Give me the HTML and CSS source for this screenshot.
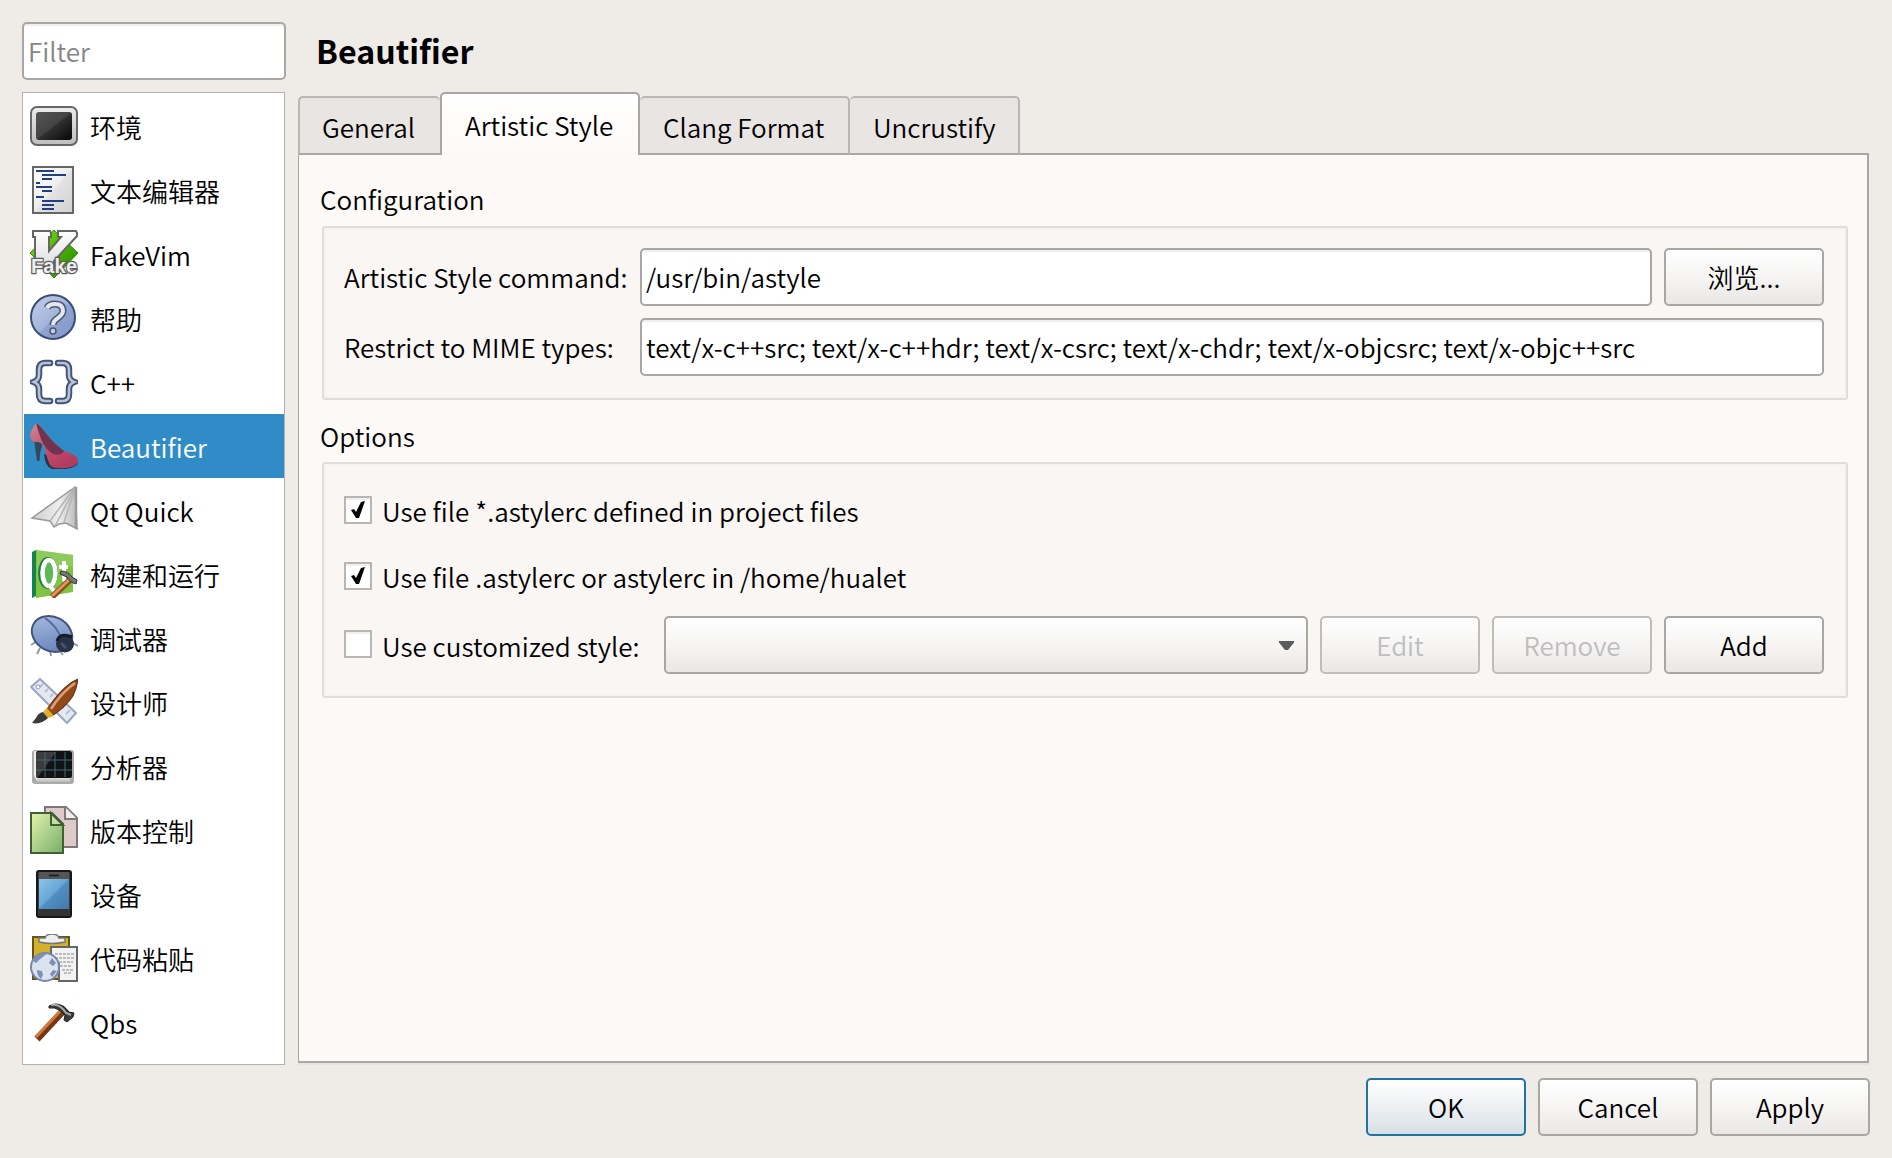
FILE: index.html
```html
<!DOCTYPE html>
<html lang="zh-CN">
<head>
<meta charset="utf-8">
<title>Options</title>
<link rel="stylesheet" href="styles.css">
</head>
<body>
<div class="dialog">
  <aside class="sidebar">
    <input class="field filter" type="text" placeholder="Filter" aria-label="Filter">
    <ul class="categories">
      <li class="category">
        <svg class="icon" viewBox="0 0 48 48"><defs><linearGradient id="screen" x1="0" y1="0" x2="1" y2="1"><stop offset="0" stop-color="#555"/><stop offset=".48" stop-color="#444"/><stop offset=".52" stop-color="#303030"/><stop offset="1" stop-color="#050505"/></linearGradient><linearGradient id="bezel" x1="0" y1="0" x2="0" y2="1"><stop offset="0" stop-color="#ececec"/><stop offset="1" stop-color="#bdbdbd"/></linearGradient></defs><rect x="1" y="5" width="46" height="38" rx="6" fill="url(#bezel)" stroke="#666" stroke-width="2"/><rect x="6" y="10" width="36" height="28" rx="3" fill="url(#screen)"/></svg>
        <span>环境</span></li>
      <li class="category">
        <svg class="icon" viewBox="0 0 48 48"><defs><linearGradient id="sheet" x1="0" y1="0" x2="1" y2="1"><stop offset="0" stop-color="#fff"/><stop offset=".48" stop-color="#efefef"/><stop offset=".53" stop-color="#e2e2e2"/><stop offset="1" stop-color="#d2d2d2"/></linearGradient></defs><rect x="3" y="1" width="40" height="46" fill="url(#sheet)" stroke="#666" stroke-width="2"/><path d="M6 5h18M12 9h24M12 13h10M6 17h4M6 21h16M12 25h10M6 31h8M12 35h22M12 39h12M12 43h12" stroke="#204080" stroke-width="2"/></svg>
        <span>文本编辑器</span></li>
      <li class="category">
        <svg class="icon" viewBox="0 0 48 48"><defs><linearGradient id="vim" x1="0" y1="0" x2="1" y2="1"><stop offset="0" stop-color="#7be800"/><stop offset="1" stop-color="#1d8200"/></linearGradient><linearGradient id="vee" x1="0" y1="0" x2="0" y2="1"><stop offset="0" stop-color="#fff"/><stop offset="1" stop-color="#dedede"/></linearGradient></defs><path d="M24 0 48 23 24 48 0 23z" fill="url(#vim)" stroke="#3c8518"/><path d="M3 1h17l1 2v4h-2v14L31 7h-3V1h18l1 2v3L24 31v6H8l-3-4V7H3z" fill="url(#vee)" stroke="#666" stroke-width="2"/><text class="fake" x="1" y="43" textLength="46">Fake</text></svg>
        <span>FakeVim</span></li>
      <li class="category">
        <svg class="icon" viewBox="0 0 48 48"><defs><linearGradient id="ball" x1="0" y1="0" x2="1" y2="1"><stop offset="0" stop-color="#c3cee8"/><stop offset=".5" stop-color="#a5b6dc"/><stop offset=".54" stop-color="#8fa3d1"/><stop offset="1" stop-color="#8498c9"/></linearGradient></defs><circle cx="23" cy="23" r="22" fill="url(#ball)" stroke="#3a4d75" stroke-width="2"/><path d="M17 14q2-4 8-4 8 0 8 7 0 3-5 7-5 3-5 7" fill="none" stroke="#4a5878" stroke-width="7"/><path d="M17 14q2-4 8-4 8 0 8 7 0 3-5 7-5 3-5 7" fill="none" stroke="#e5e7ec" stroke-width="4"/><circle cx="23" cy="37" r="3" fill="#c6cede" stroke="#4a5878" stroke-width="1.5"/></svg>
        <span>帮助</span></li>
      <li class="category">
        <svg class="icon" viewBox="0 0 48 48"><g fill="none" stroke-linecap="round"><path d="M20 5h-5q-6 0-6 7v5q0 5-5 7 5 2 5 7v5q0 7 6 7h5M28 5h5q6 0 6 7v5q0 5 5 7-5 2-5 7v5q0 7-6 7h-5" stroke="#405478" stroke-width="6.5"/><path d="M20 5h-5q-6 0-6 7v5q0 5-5 7 5 2 5 7v5q0 7 6 7h5M28 5h5q6 0 6 7v5q0 5 5 7-5 2-5 7v5q0 7-6 7h-5" stroke="#b9c2d5" stroke-width="2.6"/></g></svg>
        <span>C++</span></li>
      <li class="category selected">
        <svg class="icon" viewBox="0 0 48 48"><defs><linearGradient id="shoe" x1="0" y1="0" x2=".6" y2="1"><stop offset="0" stop-color="#d08a94"/><stop offset=".6" stop-color="#c14d6c"/><stop offset="1" stop-color="#b23c5e"/></linearGradient></defs><path d="M4 18 7 39h2.500q0-9 3-17z" fill="#34485c"/><path d="M14 32q1 13 8 15h14q11-2 12-6z" fill="#303347"/><path d="M6 1Q0 9 0 15q2 6 7 5 5-1 8 7 2 10 5 16 2 3 8 3 13 1 19-4 3-5-3-9-5-3-10-4Q22 20 16 12 9 1 6 1z" fill="url(#shoe)"/><path d="M6 1q3 1 9 9 8 11 19 19-2 5-11 3Q15 27 11 17 8 9 6 1z" fill="#73334e"/></svg>
        <span>Beautifier</span></li>
      <li class="category">
        <svg class="icon" viewBox="0 0 48 48"><defs><linearGradient id="paper" x1="0" y1="0" x2="1" y2="0"><stop offset="0" stop-color="#ccc"/><stop offset=".6" stop-color="#eee"/><stop offset="1" stop-color="#bbb"/></linearGradient></defs><path d="M45 1 2 32l18 3 4 6 5-3 7-1 11 6z" fill="url(#paper)" stroke="#999" stroke-width="1.500"/><path d="M45 1 20 35M44 4 25 40M45 3 34 36" fill="none" stroke="#b5b5b5" stroke-width="1.500"/><path d="M46 1v42" stroke="#999" stroke-width="2.500"/></svg>
        <span>Qt Quick</span></li>
      <li class="category">
        <svg class="icon" viewBox="0 0 48 48"><path d="M2 2 6 0v46l-4 2z" fill="#16834b"/><path d="M6 0 43 5v37L6 48z" fill="#80c342"/><path d="M7 0 43 5v10L7 30z" fill="#a2d477" opacity=".45"/><ellipse cx="18" cy="23" rx="7" ry="13" fill="none" stroke="#1d7c45" stroke-width="6"/><ellipse cx="19" cy="23" rx="6.500" ry="13" fill="#5fb858" stroke="#fff" stroke-width="4.500"/><path d="m19 35 5 6M34 11v17q0 4 4 3M29 17h9" fill="none" stroke="#fff" stroke-width="4"/><path d="m22 47 19-18" stroke="#8d4b20" stroke-width="6"/><path d="m22 46 18-17" stroke="#dc965c" stroke-width="3"/><path d="M31 21q7 0 11 6l5 3-1 4-5-2-4-5-7-3z" fill="#777" stroke="#333"/></svg>
        <span>构建和运行</span></li>
      <li class="category">
        <svg class="icon" viewBox="0 0 48 48"><defs><linearGradient id="bug" x1="0" y1="0" x2="1" y2="1"><stop offset="0" stop-color="#afc0e2"/><stop offset=".55" stop-color="#819aca"/><stop offset="1" stop-color="#637eb3"/></linearGradient></defs><path d="M7 27 1 31M10 34l-3 6M20 37l1 5M30 37l3 4M41 28l7 4" fill="none" stroke="#999" stroke-width="2"/><ellipse cx="22" cy="20" rx="21" ry="17" transform="rotate(28 22 20)" fill="url(#bug)" stroke="#40547d" stroke-width="2"/><path d="M15 4Q28 13 31 25" fill="none" stroke="#526b9c" stroke-width="2"/><ellipse cx="35" cy="30" rx="9" ry="8.500" fill="#273247"/><path d="M27 27q3-9 15-4" fill="none" stroke="#131b29" stroke-width="3"/><path d="m31 29 5 5" stroke="#46536b" stroke-width="3"/></svg>
        <span>调试器</span></li>
      <li class="category">
        <svg class="icon" viewBox="0 0 48 48"><path d="M1 9 10 1l36 34-9 10z" fill="#e3e8f3" stroke="#9aa6bd" stroke-width="2" stroke-linejoin="round"/><path d="m13 6-3 3m8 2-3 3m8 2-3 3m15 8-3 3m8 2-4 4" stroke="#b7c1d6" stroke-width="2"/><circle cx="8" cy="9" r="2" fill="#fff" stroke="#8f9cba"/><path d="M48 1Q34 6 17 31l5 7Q36 29 43 18q4-8 5-17z" fill="#924917" stroke="#552a12"/><path d="M45 5Q31 15 21 31" fill="none" stroke="#daa27b" stroke-width="2.500"/><path d="m17 30-4 4 5 6 6-2z" fill="#e2ad2d"/><path d="M13 34q-5 1-7 6l-4 5q9 2 16-5z" fill="#393939"/></svg>
        <span>设计师</span></li>
      <li class="category">
        <svg class="icon" viewBox="0 0 48 48"><path d="M5 8h36q3 0 3 3v28q0 3-3 3H5q-3 0-3-3V11q0-3 3-3z" fill="#aaa"/><path d="M4 9h38v25l-3 5H7l-3-5z" fill="#eee"/><rect x="6" y="9" width="36" height="27" rx="2" fill="#101314"/><path d="M6 10h20L8 35H6z" fill="#4b4b4b" opacity=".75"/><path d="M6 18h36M6 28h36M15 10v25M25 10v25M35 10v25" stroke="#426875" stroke-width="1"/><path d="M7 38h33" stroke="#ccc" stroke-width="3"/></svg>
        <span>分析器</span></li>
      <li class="category">
        <svg class="icon" viewBox="0 0 48 48"><defs><linearGradient id="leaf" x1="0" y1="0" x2="1" y2="1"><stop offset="0" stop-color="#e6f2a9"/><stop offset=".55" stop-color="#a6cd8a"/><stop offset="1" stop-color="#79ad67"/></linearGradient></defs><path d="M15 1h21l11 11v29H15z" fill="#dfcacb" stroke="#817778" stroke-width="2"/><path d="M35 1v12h12" fill="#eee" stroke="#817778" stroke-width="2"/><path d="M1 7h21l11 11v29H1z" fill="url(#leaf)" stroke="#405f35" stroke-width="2"/><path d="M21 7v12h12z" fill="#c8dda3" stroke="#405f35" stroke-width="2"/></svg>
        <span>版本控制</span></li>
      <li class="category">
        <svg class="icon" viewBox="0 0 48 48"><defs><linearGradient id="glass" x1="0" y1="0" x2="1" y2="1"><stop offset="0" stop-color="#8ec6eb"/><stop offset=".47" stop-color="#68a6d7"/><stop offset=".53" stop-color="#4f8ec3"/><stop offset="1" stop-color="#4478aa"/></linearGradient></defs><rect x="7" y="1" width="34" height="46" rx="2" fill="#3c3c3c" stroke="#171717" stroke-width="2"/><path d="M9 2h30v7H9z" fill="#555"/><path d="M9 9h30v30H9z" fill="url(#glass)"/><path d="M19 5.500h10" stroke="#222" stroke-width="2"/><path d="M9 39h30v7H9z" fill="#333"/></svg>
        <span>设备</span></li>
      <li class="category">
        <svg class="icon" viewBox="0 0 48 48"><rect x="3" y="3" width="36" height="42" fill="#d4b12b" stroke="#665519" stroke-width="2"/><path d="M9 4h6q1-4 7-4t7 4h6v4q-13 3-26 0z" fill="#eee" stroke="#777" stroke-width="1.500"/><path d="M21 13h26v34H29V30h-8z" fill="#f2f2f2" stroke="#666" stroke-width="2"/><path d="M25 20h19M25 24h19M29 28h14M30 32h12M32 36h12M34 39h8" stroke="#aaa" stroke-width="1.500" stroke-dasharray="3 1"/><circle cx="15" cy="33" r="14" fill="#dbe3ef" stroke="#7388ad" stroke-width="2"/><path d="M3 27q6-9 15-8l-4 3-5 4-3 3zM7 36l5 1 1 4-2 4q-4-3-4-9zM22 24l4 5-3 3-4-3zM23 36l4 1-5 6-2-3z" fill="#7d91b8"/></svg>
        <span>代码粘贴</span></li>
      <li class="category">
        <svg class="icon" viewBox="0 0 48 48"><path d="m7 41 29-31" stroke="#763814" stroke-width="7"/><path d="M6 39 34 9" stroke="#d17b3a" stroke-width="3"/><path d="M19 8q7-4 14 0l6 6 5 1-1 4-6 5-3-2 1-5-6-5q-4-3-10-2z" fill="#353b3c" stroke="#222"/><path d="M21 7q9-2 15 8l5 2" fill="none" stroke="#aaa" stroke-width="2"/></svg>
        <span>Qbs</span></li>
    </ul>
  </aside>

  <main class="content">
    <h1 class="page-title">Beautifier</h1>
    <div class="tabs" role="tablist">
      <div class="tab tab-general" role="tab">General</div>
      <div class="tab tab-artistic active" role="tab">Artistic Style</div>
      <div class="tab tab-clang" role="tab">Clang Format</div>
      <div class="tab tab-uncrustify" role="tab">Uncrustify</div>
    </div>
    <section class="pane">
      <h2 class="group-title">Configuration</h2>
      <div class="group config">
        <label class="form-label" for="command">Artistic Style command:</label>
        <input class="field" id="command" type="text" value="/usr/bin/astyle">
        <button class="button" type="button">浏览...</button>
        <label class="form-label" for="mime">Restrict to MIME types:</label>
        <input class="field wide" id="mime" type="text" value="text/x-c++src; text/x-c++hdr; text/x-csrc; text/x-chdr; text/x-objcsrc; text/x-objc++src">
      </div>
      <h2 class="group-title options-title">Options</h2>
      <div class="group options">
        <div class="option">
          <span class="box"><svg class="check" viewBox="0 0 14 18"><path d="M0 9 3 8 5 11 10 1 14 0 8 17H5z"/></svg></span>
          <span>Use file *.astylerc defined in project files</span>
        </div>
        <div class="option">
          <span class="box"><svg class="check" viewBox="0 0 14 18"><path d="M0 9 3 8 5 11 10 1 14 0 8 17H5z"/></svg></span>
          <span>Use file .astylerc or astylerc in /home/hualet</span>
        </div>
        <div class="custom">
          <div class="option custom-label">
            <span class="box"></span>
            <span>Use customized style:</span>
          </div>
          <div class="button combo"><svg class="arrow" viewBox="0 0 15 9"><path d="M0 0h15v1.500L9 9H6L0 1.500z" fill="#5b5b5b"/></svg></div>
          <button class="button" type="button" disabled>Edit</button>
          <button class="button" type="button" disabled>Remove</button>
          <button class="button" type="button">Add</button>
        </div>
      </div>
    </section>
    <footer class="actions">
      <button class="button primary" type="button">OK</button>
      <button class="button" type="button">Cancel</button>
      <button class="button" type="button">Apply</button>
    </footer>
  </main>
</div>
</body>
</html>
```
FILE: styles.css
```css
* { box-sizing: border-box; }

body {
  margin: 0;
  background: #efebe7;
  color: #000;
  font: 350 26px/38px "Noto Sans CJK SC", sans-serif;
}

input, button { font: inherit; color: inherit; }

.dialog {
  display: flex;
  gap: 12px;
  width: 1892px;
  height: 1158px;
  padding: 22px;
  overflow: hidden;
}

/* Category list */
.sidebar { display: flex; flex-direction: column; gap: 12px; width: 264px; }

.field {
  width: 100%;
  height: 58px;
  padding: 0 4px 1px;
  border: 2px solid #aaa6a3;
  border-radius: 5px;
  background: #fff;
  box-shadow: inset 0 2px #f0efee;
  outline: 0;
}
.filter { padding-bottom: 2px; }
.filter::placeholder { color: #858585; opacity: 1; }

.categories {
  width: 263px;
  height: 973px;
  margin: 0;
  padding: 1px 0;
  border: 1px solid #b5b1ac;
  background: #fff;
  list-style: none;
}
.category {
  display: flex;
  align-items: center;
  gap: 12px;
  height: 64px;
  margin: 0 0 0 1px;
  padding-left: 6px;
  white-space: nowrap;
}
.category span { padding-top: 2px; }
.category.selected { background: #308cc6; color: #fff; }
.icon { flex: none; width: 48px; height: 48px; }
.fake {
  font: bold 20px "Liberation Sans", sans-serif;
  fill: #eee;
  stroke: #5c5c5c;
  stroke-width: 2.4px;
  paint-order: stroke;
}

/* Page */
.content { display: flex; flex-direction: column; width: 1572px; }

.page-title {
  height: 70px;
  margin: 0;
  padding: 6px 0 0 18px;
  font-size: 32.2px;
  font-weight: 700;
  line-height: 44px;
}

.tabs {
  display: flex;
  flex: none;
  align-items: flex-end;
  height: 63px;
  margin-bottom: -2px;
  z-index: 1;
}
.tab {
  height: 59px;
  padding: 10px 0 0 23px;
  border: 2px solid #bab6b3;
  border-bottom-color: #aaa6a3;
  border-left-width: 0;
  border-radius: 5px 5px 0 0;
  background: #e9e5e2;
  white-space: nowrap;
}
.tab-general { width: 142px; padding-left: 22px; border-left-width: 2px; border-right: 0; }
.tab-artistic { width: 200px; }
.tab-clang { width: 210px; }
.tab-uncrustify { width: 170px; }
.tab.active {
  height: 63px;
  padding-top: 12px;
  border: 2px solid #aaa6a3;
  border-bottom: 0;
  background: linear-gradient(#fff, #fdf9f6);
}

.pane {
  flex: none;
  width: 1571px;
  height: 910px;
  padding: 15px 19px 0 23px;
  border: 2px solid #aaa6a3;
  border-left-width: 1px;
  background: #fdf9f6;
  box-shadow: 0 2px #e6e2de;
}

.group-title { height: 38px; margin: 10px 0 8px -2px; font-size: 26px; font-weight: inherit; line-height: 38px; }
.options-title { margin: 17px 0 7px -2px; }

.group {
  border: 2px solid #e1ddda;
  border-radius: 3px;
  background: #faf6f3;
  box-shadow: inset 0 0 0 2px #f7f3f0;
}

.config {
  display: grid;
  grid-template-columns: 284px 1012px 160px;
  grid-template-rows: 58px 58px;
  column-gap: 12px;
  row-gap: 12px;
  height: 174px;
  padding: 20px;
  align-items: center;
}
.wide { grid-column: span 2; }
.form-label { white-space: nowrap; }

.button {
  width: 160px;
  height: 58px;
  padding: 0;
  border: 2px solid #aaa6a3;
  border-radius: 5px;
  background: linear-gradient(#fff, #f6f5f4 50%, #e9e8e5);
  text-align: center;
}
.button:disabled { border-color: #c1bdba; color: #bebebe; }
.button.primary { border-color: #2373a1; background: linear-gradient(#fff, #edf0f2 50%, #d7e0e5); }

.options { height: 236px; padding: 20px; }
.option { display: flex; align-items: center; gap: 10px; white-space: nowrap; }
.options > .option { height: 38px; margin: 7px 0 28px; }
.options > .option + .option { margin-bottom: 21px; }
.option span + span { padding-top: 2px; }
.box {
  display: flex;
  align-items: center;
  justify-content: center;
  width: 28px;
  height: 28px;
  border: 2px solid #b9b6b2;
  background: #fff;
  box-shadow: inset 0 2px #f0f0f0;
}
.check { width: 14px; height: 18px; }
.custom { display: flex; gap: 12px; align-items: center; }
.custom-label { width: 308px; }
.custom-label .box { margin-bottom: 2px; }
.combo { display: flex; align-items: center; justify-content: flex-end; width: 644px; padding-right: 12px; }
.arrow { width: 15px; height: 9px; }

.actions { display: flex; justify-content: flex-end; gap: 12px; margin-top: 15px; }
```
